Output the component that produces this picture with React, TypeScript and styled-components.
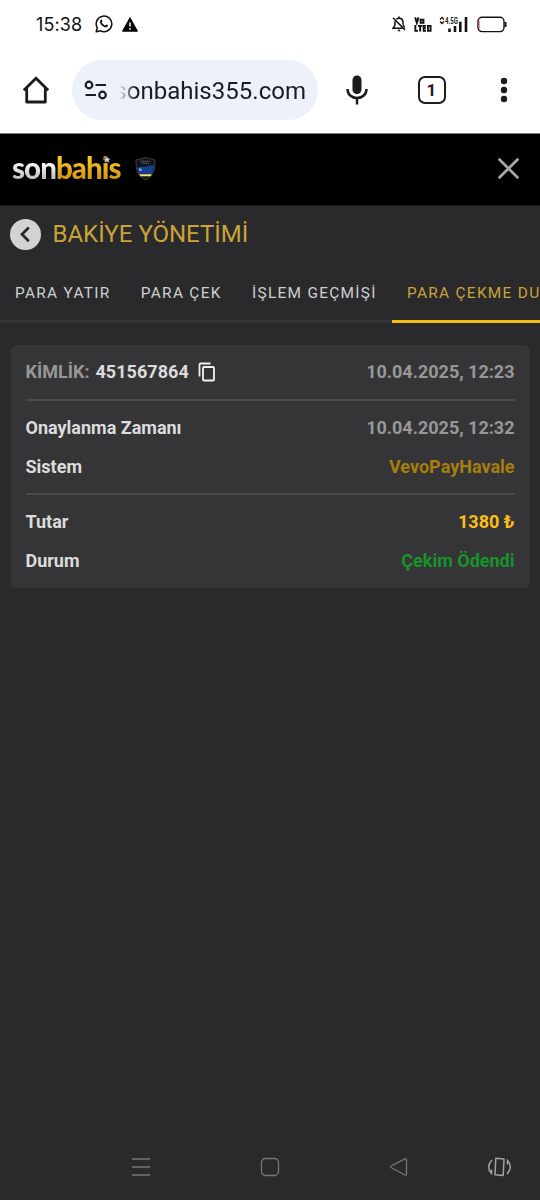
import React from "react";
import styled, { createGlobalStyle } from "styled-components";

const GlobalStyle = createGlobalStyle`
  * { box-sizing: border-box; }
  body { margin: 0; background: #2a2a2c; }
  svg { display: block; flex: none; }
`;

const Screen = styled.div`
  width: 540px;
  height: 1200px;
  display: flex;
  flex-direction: column;
  overflow: hidden;
  background: #2a2a2c;
  font-family: Roboto, "Liberation Sans", sans-serif;
`;

const StatusBar = styled.div`
  height: 47px;
  flex: none;
  display: flex;
  align-items: center;
  padding: 1px 33px 0 36px;
  background: #fff;
  color: #111;
`;

const Clock = styled.span`
  width: 59px;
  padding-top: 1px;
  font: 400 18px/24px Inter, sans-serif;
  letter-spacing: 0.1px;
`;

const StatusIcons = styled.div<{ $end?: boolean; $gap?: number }>`
  display: flex;
  align-items: center;
  gap: ${(p) => p.$gap ?? 9}px;
  margin-left: ${(p) => (p.$end ? "auto" : "0")};
`;

const BrowserBar = styled.div`
  height: 87px;
  flex: none;
  display: flex;
  align-items: center;
  padding: 0 24px 1px 22px;
  background: #fff;
  border-bottom: 1px solid #77777a;
`;

const AddressPill = styled.div`
  width: 246px;
  height: 60px;
  margin-left: 22px;
  padding: 0 12px;
  display: flex;
  align-items: center;
  gap: 11px;
  border-radius: 30px;
  background: #edf1fa;
`;

const Address = styled.div`
  flex: 1;
  display: flex;
  justify-content: flex-end;
  overflow: hidden;
  padding-top: 2px;
  color: #1b1c20;
  font-size: 24px;
  line-height: 32px;
  letter-spacing: 0.02px;
  white-space: nowrap;
  mask-image: linear-gradient(to right, transparent, #000 17px);
`;

const BrowserActions = styled.div`
  flex: 1;
  display: flex;
  align-items: center;
  justify-content: space-between;
  padding-left: 28px;
`;

const SiteHeader = styled.header`
  height: 72px;
  flex: none;
  display: flex;
  align-items: center;
  padding: 0 20px 2px 12px;
  background: #000;
  border-bottom: 1px solid #1c1c1e;
`;

const Logo = styled.div`
  position: relative;
  display: flex;
  width: 110px;
  margin-top: -2px;
  font: 900 29.5px/36px Lato, sans-serif;
  letter-spacing: -0.95px;
`;

const LogoPart = styled.span<{ $gold?: boolean }>`
  color: transparent;
  background: ${(p) =>
    p.$gold
      ? "linear-gradient(#f8c41e 25%, #d39516 80%)"
      : "linear-gradient(#fff 35%, #bdbdbd 80%)"};
  background-clip: text;
`;

const LogoStar = styled.svg`
  position: absolute;
  left: 90px;
  top: 5px;
`;

const Crest = styled.div`
  margin-left: 13px;
  flex: 1;
`;

const TitleRow = styled.div`
  height: 57px;
  flex: none;
  display: flex;
  align-items: center;
  gap: 11.5px;
  padding: 0 0 1px 10px;
`;

const BackButton = styled.button`
  width: 31px;
  height: 31px;
  display: grid;
  place-items: center;
  padding: 0;
  border: 0;
  border-radius: 50%;
  background: #d3d3d3;
`;

const Title = styled.h1`
  margin: 0;
  color: #c9a437;
  font-size: 24px;
  font-weight: 400;
  line-height: 30px;
`;

const Tabs = styled.nav`
  height: 60px;
  flex: none;
  display: flex;
  overflow: hidden;
  box-shadow: inset 0 -3px #343436;
`;

const Tab = styled.div<{ $active?: boolean }>`
  flex: none;
  padding: 20px 15.3px 0 15px;
  color: ${(p) => (p.$active ? "#c9a437" : "#d0d0d1")};
  border-bottom: 3px solid ${(p) => (p.$active ? "#f5bd16" : "transparent")};
  font-size: 15.4px;
  line-height: 20px;
  letter-spacing: 1.3px;
  white-space: nowrap;
`;

const Card = styled.section`
  margin: 22px 10.5px 0;
  height: 243px;
  flex: none;
  padding: 7px 15px 0;
  border-radius: 6px;
  background: #353537;
`;

const Group = styled.div`
  padding: 0 0 7.5px;
  & + & {
    border-top: 2px solid #4a4a4c;
    padding: 7.6px 0 6.9px;
  }
`;

const Row = styled.div`
  height: 39px;
  display: flex;
  align-items: center;
  justify-content: space-between;
  color: #dcdcdd;
  font-size: 18px;
  font-weight: 700;
  line-height: 24px;
`;

const Identity = styled.div`
  display: flex;
  align-items: center;
  gap: 6px;
`;

const Muted = styled.span`
  color: #979798;
`;

const Digits = styled.span`
  letter-spacing: 0.05px;
  margin-right: 3.5px;
`;

const Value = styled.span<{ $color?: string }>`
  color: ${(p) => p.$color ?? "#979798"};
`;

const SystemNav = styled.footer`
  margin-top: auto;
  height: 66px;
  flex: none;
  display: flex;
  align-items: center;
  justify-content: space-between;
  padding: 0 28px 0 131px;
`;

const NavButtons = styled.div`
  display: flex;
  gap: 109px;
`;

const WhatsAppIcon = () => (
  <svg width="18" height="18" viewBox="0 0 18 18" fill="none" stroke="#111">
    <path d="M1.2 16.8l1.1-4A7.8 7.8 0 1 1 5.5 15.8z" strokeWidth="1.5" strokeLinejoin="round" />
    <path d="M5.3 5.4c.8-1.5 1.7-.8 2.1.5.2.7-.8 1.1-.5 1.6.7 1.4 1.7 2.2 3 2.9.7.3 1-.9 1.6-.8 1.3.4 2.1 1 .8 2.2-1.5 1.2-3.7.3-5.3-1.3C5.4 9 4.4 7 5.3 5.4z" fill="#111" stroke="none" />
  </svg>
);

const WarningIcon = () => (
  <svg width="16" height="15" viewBox="0 0 16 15">
    <path d="M8 .7l7.5 13.5H.5z" fill="#050505" stroke="#050505" strokeLinejoin="round" />
    <path d="M8 5.5v4M8 11v1.8" stroke="#fff" strokeWidth="1.5" />
  </svg>
);

const BellOffIcon = () => (
  <svg width="14" height="16" viewBox="0 0 14 16" fill="none" stroke="#111" strokeWidth="1.5">
    <path d="M4.3 3.2C5 2.5 6 2.2 7 2.2c2.5 0 4 1.8 4 4.3v2M3.2 5C2.9 6 3 7.5 2.9 9c-.1 1.5-1.2 2-1.8 3.2h9.5" />
    <path d="M7 .6v1.6M1 1.7l12 12.2M5.8 14.5h2.4M11 8.5l1.7 3" />
  </svg>
);

const VolteIcon = () => (
  <svg width="18" height="17" viewBox="0 0 19 17" fill="none" stroke="#111" strokeWidth="2">
    <path d="M1.2 1l1.8 5.8L4.8 1M7 3.4h3v3.2H7z" />
    <path d="M1.4 9v6.2h2.800M4.200 9.900h4.600M6.500 9.900V16M12.700 9.900h-2.500v5.300h2.500M10.200 12.500h2.300M14.700 9.900h2.800v5.300h-2.800z" />
  </svg>
);

const SignalIcon = () => (
  <svg width="29" height="17" viewBox="0 0 29 17" fill="none" stroke="#111">
    <path d="M1 3.5L3 1.5l2 2M1 5.5l2 2 2-2" strokeWidth="1.3" />
    <text x="6" y="8.3" fontFamily="Roboto, sans-serif" fontSize="9" fontWeight="700" textLength="13" lengthAdjust="spacingAndGlyphs" fill="#222" stroke="none">4.5G</text>
    <path d="M10.5 12.5V16M16 10v6M21.3 5.8V16M27 1v15" strokeWidth="2.6" />
  </svg>
);

const BatteryIcon = () => (
  <svg width="30" height="17" viewBox="0 0 30 17" fill="none">
    <rect x="1" y="1.2" width="26" height="14.4" rx="4" stroke="#151515" strokeWidth="1.4" />
    <path d="M2.5 4v9" stroke="#eaa4a4" strokeWidth="1.2" />
    <path d="M28.5 6v5" stroke="#151515" strokeWidth="2" />
  </svg>
);

const HomeIcon = () => (
  <svg width="28" height="28" viewBox="0 0 28 28" fill="none" stroke="#1c1c1c" strokeWidth="2.8">
    <path d="M1.8 14.3L14 2.2l12.2 12.1" />
    <path d="M4.7 12v14h18.6V12" strokeLinejoin="round" />
  </svg>
);

const TuneIcon = () => (
  <svg width="24" height="20" viewBox="0 0 24 20" fill="none" stroke="#1b1c20" strokeWidth="2.2">
    <circle cx="5" cy="5" r="3.3" />
    <path d="M11.5 5H22M1.5 15H12" />
    <circle cx="18.5" cy="15" r="3.3" />
  </svg>
);

const MicIcon = () => (
  <svg width="22" height="30" viewBox="0 0 22 30" fill="none">
    <rect x="6.5" y=".5" width="9" height="18.5" rx="4.5" fill="#1c1c1c" />
    <path d="M1.5 14c0 5.400 4 9 9.500 9s9.500-3.600 9.500-9M11 23v6.500" stroke="#1c1c1c" strokeWidth="2.5" />
  </svg>
);

const TabCount = styled.div`
  width: 28px;
  height: 28px;
  margin-left: 3px;
  display: grid;
  place-items: center;
  border: 2.5px solid #1c1c1c;
  border-radius: 7px;
  color: #1c1c1c;
  font-size: 17px;
  font-weight: 700;
  line-height: 20px;
`;

const MoreIcon = () => (
  <svg width="24" height="26" viewBox="0 0 24 26" fill="#1c1c1c">
    <circle cx="12" cy="4" r="3.2" />
    <circle cx="12" cy="13" r="3.2" />
    <circle cx="12" cy="22" r="3.2" />
  </svg>
);

const CrestIcon = () => (
  <svg width="21" height="24" viewBox="0 0 21 24">
    <path d="M1 3l4-1 5.5-1.4L16 2l4 1c0 9-.5 15-9.5 20C1.5 18 1 12 1 3z" fill="#10151c" stroke="#554a35" strokeWidth=".8" />
    <path d="M2 11c4-2 6-1 9-1.500 3-.5 5-1.500 8-1-.2 3.500-1 6-2.700 8.500H4.700C3 15 2.200 13 2 11z" fill="#173d91" />
    <path d="M4 17.200h13l-1.500 2H5.500z" fill="#eee574" />
    <path d="M4 11.500l2.500 2M4.500 13.500l2-1.500" stroke="#d8e3ef" strokeWidth="1" />
    <path d="M5.500 4.200h10M6.500 6.200h8" stroke="#65676a" strokeWidth="1" strokeDasharray="1.5 .5" />
  </svg>
);

const CloseIcon = () => (
  <svg width="23" height="23" viewBox="0 0 23 23" stroke="#a7a7a8" strokeWidth="2.7">
    <path d="M1.7 1.7l19.6 19.6M21.3 1.7L1.7 21.3" />
  </svg>
);

const BackIcon = () => (
  <svg width="15" height="19" viewBox="0 0 15 19" fill="none" stroke="#2a2a2c" strokeWidth="2.7">
    <path d="M10.8 2.5L4 9.3l6.8 6.9" />
  </svg>
);

const CopyIcon = () => (
  <svg width="18" height="20" viewBox="0 0 18 20" fill="none" stroke="#f1f1f1" strokeWidth="1.8">
    <path d="M1.5 14.5V2.5a1 1 0 0 1 1-1H12.5" />
    <rect x="5" y="5" width="11" height="13.5" rx="1" />
  </svg>
);

const MenuIcon = () => (
  <svg width="20" height="20" viewBox="0 0 20 20" stroke="#777779" strokeWidth="1.3">
    <path d="M1 2h18M1 10h18M1 18h18" />
  </svg>
);

const SquareIcon = () => (
  <svg width="20" height="20" viewBox="0 0 20 20" fill="none" stroke="#777779" strokeWidth="1.3">
    <rect x="1.5" y="1.5" width="17" height="17" rx="4" />
  </svg>
);

const TriangleIcon = () => (
  <svg width="20" height="20" viewBox="0 0 20 20" fill="none" stroke="#777779" strokeWidth="1.3">
    <path d="M16 1.9L2.5 8.7q-1.5 1 0 2L16 18q1.5.6 1.5-1V3q0-1.6-1.5-1.1z" />
  </svg>
);

const RotateIcon = () => (
  <svg width="25" height="20" viewBox="0 0 25 20" fill="none" stroke="#a2a2a3" strokeWidth="1.5">
    <path d="M8.8 1.3l8.2.7-.8 16.5-8.2-.7z" strokeLinejoin="round" />
    <path d="M5 3C.7 7 .8 13 4.500 16.500V12.500M20 17c4.300-4 4.200-10 .5-13.500v4" />
  </svg>
);

const tabs = ["PARA YATIR", "PARA ÇEK", "İŞLEM GEÇMİŞİ", "PARA ÇEKME DURUMU"];

export default function App() {
  return (
    <Screen>
      <GlobalStyle />
      <StatusBar>
        <Clock>15:38</Clock>
        <StatusIcons>
          <WhatsAppIcon />
          <WarningIcon />
        </StatusIcons>
        <StatusIcons $end>
          <StatusIcons $gap={7}>
            <StatusIcons $gap={8}>
              <BellOffIcon />
              <VolteIcon />
            </StatusIcons>
            <SignalIcon />
          </StatusIcons>
          <BatteryIcon />
        </StatusIcons>
      </StatusBar>
      <BrowserBar>
        <HomeIcon />
        <AddressPill>
          <TuneIcon />
          <Address>sonbahis355.com</Address>
        </AddressPill>
        <BrowserActions>
          <MicIcon />
          <TabCount>1</TabCount>
          <MoreIcon />
        </BrowserActions>
      </BrowserBar>
      <SiteHeader>
        <Logo>
          <LogoPart>son</LogoPart>
          <LogoPart $gold>bahis</LogoPart>
          <LogoStar width="10" height="9" viewBox="0 0 10 9" fill="#d5d8df" stroke="#000" strokeWidth=".6">
            <path d="M5 .5l1.2 2.700 3 .2-2.300 1.900.7 3L5 6.700 2.400 8.300l.7-3L.8 3.400l3-.2z" />
          </LogoStar>
        </Logo>
        <Crest>
          <CrestIcon />
        </Crest>
        <CloseIcon />
      </SiteHeader>
      <TitleRow>
        <BackButton aria-label="Geri">
          <BackIcon />
        </BackButton>
        <Title>BAKİYE YÖNETİMİ</Title>
      </TitleRow>
      <Tabs>
        {tabs.map((label, i) => (
          <Tab key={label} $active={i === 3}>
            {label}
          </Tab>
        ))}
      </Tabs>
      <Card>
        <Group>
          <Row>
            <Identity>
              <Muted>KİMLİK:</Muted>
              <Digits>451567864</Digits>
              <CopyIcon />
            </Identity>
            <Value>10.04.2025, 12:23</Value>
          </Row>
        </Group>
        <Group>
          <Row>
            <span>Onaylanma Zamanı</span>
            <Value>10.04.2025, 12:32</Value>
          </Row>
          <Row>
            <span>Sistem</span>
            <Value $color="#a57e0c">VevoPayHavale</Value>
          </Row>
        </Group>
        <Group>
          <Row>
            <span>Tutar</span>
            <Value $color="#fdbd19">1380 ₺</Value>
          </Row>
          <Row>
            <span>Durum</span>
            <Value $color="#169329">Çekim Ödendi</Value>
          </Row>
        </Group>
      </Card>
      <SystemNav>
        <NavButtons>
          <MenuIcon />
          <SquareIcon />
          <TriangleIcon />
        </NavButtons>
        <RotateIcon />
      </SystemNav>
    </Screen>
  );
}
